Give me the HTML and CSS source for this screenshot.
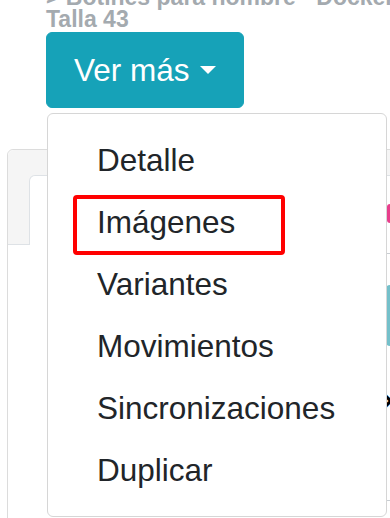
FILE: index.html
```html
<!DOCTYPE html>
<html>
	<head>
		<meta charset="utf-8">
		<title>Ver más</title>
		<link rel="stylesheet" href="styles.css">
	</head>
	<body>
		<div class="page">
			<div class="head">
				<h5 class="path"><span class="crumb">&gt; Botines para hombre - Dockers Blanco</span>Talla 43</h5>
				<div class="dropdown">
					<button class="btn">Ver más<span class="caret"></span></button>
					<div class="menu">
						<a>Detalle</a>
						<a>Imágenes</a>
						<a>Variantes</a>
						<a>Movimientos</a>
						<a>Sincronizaciones</a>
						<a>Duplicar</a>
					</div>
					<span class="mark"></span>
				</div>
			</div>
			<div class="card">
				<div class="card-header">
					<div class="tab">
						<span class="badge"></span>
					</div>
				</div>
				<div class="card-body">
					<div class="rule"></div>
					<div class="action"></div>
					<div class="close">&times;</div>
					<div class="rule rule-low"></div>
				</div>
			</div>
		</div>
	</body>
</html>
```

FILE: styles.css
```css
* {
	margin: 0;
	padding: 0;
	box-sizing: border-box;
}

body {
	font-family: "Liberation Sans", Arial, sans-serif;
	background-color: white;
	overflow: hidden;
}

.page {
	height: 518px;
	padding: 0 7px;
	overflow: hidden;
}

.head {
	padding-left: 39px;
}

.path {
	margin-top: -14px;
	font-size: 23px;
	line-height: 22px;
	font-weight: bold;
	color: #a4aaaf;
}

.path .crumb {
	display: block;
	white-space: nowrap;
}

.dropdown {
	position: relative;
	margin-top: 2px;
}

.btn {
	display: inline-flex;
	align-items: center;
	padding: 14px 27px;
	border: 1px solid #16a2b8;
	border-radius: 6px;
	background-color: #16a2b8;
	color: white;
	font-family: inherit;
	font-size: 31.5px;
	line-height: 46px;
}

.caret {
	display: inline-block;
	margin-left: 10px;
	border-top: 8px solid white;
	border-left: 8px solid transparent;
	border-right: 8px solid transparent;
}

.menu {
	position: absolute;
	top: 81px;
	left: 1px;
	z-index: 2;
	width: 340px;
	padding: 15px 0;
	border: 1px solid #d6d6d6;
	border-radius: 6px;
	background-color: white;
}

.menu a {
	display: block;
	padding: 8px 49px;
	font-size: 31.5px;
	line-height: 46px;
	color: #212529;
	white-space: nowrap;
}

.mark {
	position: absolute;
	top: 163px;
	left: 27px;
	z-index: 3;
	width: 212px;
	height: 60px;
	border: 4px solid #ff0000;
	border-radius: 4px;
}

.card {
	margin-top: 41px;
	margin-right: -40px;
	height: 500px;
	border: 1px solid #dcdcdc;
	border-radius: 6px;
}

.card-header {
	height: 95px;
	padding: 25px 0 0 21px;
	border-bottom: 1px solid #dee2e6;
	border-radius: 6px 6px 0 0;
	background-color: #f5f5f5;
}

.tab {
	height: 70px;
	padding-top: 28px;
	padding-left: 357px;
	border: 1px solid #dee2e6;
	border-bottom: none;
	border-radius: 6px 0 0 0;
	background-color: white;
}

.badge {
	display: block;
	width: 30px;
	height: 19px;
	border-radius: 3px;
	background-color: #e83e8c;
}

.card-body {
	padding: 8px 0 0 378px;
}

.rule {
	height: 1px;
	background-color: #c9ced3;
}

.action {
	width: 40px;
	height: 61px;
	margin-top: 31px;
	border-radius: 4px;
	background-color: #74c0ca;
}

.close {
	margin-top: 40px;
	margin-left: -4px;
	font-size: 30px;
	line-height: 30px;
	font-weight: bold;
	color: black;
}

.rule-low {
	margin-top: 84px;
}
```
